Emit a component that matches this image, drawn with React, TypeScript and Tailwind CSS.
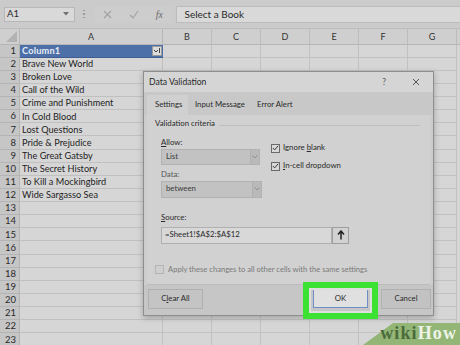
import React from "react";

const books = [
  "Brave New World",
  "Broken Love",
  "Call of the Wild",
  "Crime and Punishment",
  "In Cold Blood",
  "Lost Questions",
  "Pride & Prejudice",
  "The Great Gatsby",
  "The Secret History",
  "To Kill a Mockingbird",
  "Wide Sargasso Sea",
];

const cols = ["B", "C", "D", "E", "F", "G"];

function Row({ n, text, selected }: { n: number; text?: string; selected?: boolean }) {
  return (
    <div className="flex h-[13.14px] shrink-0">
      <div className="w-[20px] shrink-0 bg-[#c6c6c6] border-r border-b border-[#b4b4b4] flex items-center justify-end pr-[3px] text-[9.5px] text-[#2a2a2a] leading-none">
        {n}
      </div>
      {selected ? (
        <div className="w-[143px] shrink-0 bg-[#4d70a8] border-b border-[#3f5f93] flex items-center pl-[2px] text-[9.2px] text-[#e6ecf6] leading-none relative">
          <span className="font-bold tracking-[0.2px]">{text}</span>
          <div className="absolute right-[1px] top-[1px] w-[10px] h-[10px] bg-[#dcdcdc] border border-[#9a9a9a] flex items-center justify-center">
            <svg width="8" height="8" viewBox="0 0 8 8">
              <path d="M1 3 L3 5 L5 3" fill="none" stroke="#444" strokeWidth="1" />
              <path d="M6.5 1 V6" stroke="#444" strokeWidth="1" />
            </svg>
          </div>
        </div>
      ) : (
        <div className="w-[143px] shrink-0 bg-[#d6d6d6] border-r border-b border-[#c0c0c0] flex items-center pl-[2px] text-[9.2px] text-[#1e1e1e] leading-none whitespace-nowrap">
          {text}
        </div>
      )}
      {cols.map((c) => (
        <div key={c} className="w-[49px] shrink-0 bg-[#d6d6d6] border-r border-b border-[#c2c2c2]" />
      ))}
    </div>
  );
}

function Check({ checked }: { checked?: boolean }) {
  return (
    <div className="w-[9px] h-[9px] border border-[#6a6a6a] bg-[#d8d8d8] flex items-center justify-center shrink-0">
      {checked && (
        <svg width="8" height="8" viewBox="0 0 8 8">
          <path d="M1 4 L3 6.2 L7 1.5" fill="none" stroke="#333" strokeWidth="1.1" />
        </svg>
      )}
    </div>
  );
}

function Dropdown({ value, w, h }: { value: string; w: string; h: string }) {
  return (
    <div className={`${w} ${h} border border-[#b2b2b2] bg-[#c2c2c2] flex items-center`}>
      <span className="pl-[4px] text-[7.8px] text-[#3a3a3a] flex-1">{value}</span>
      <div className="w-[9px] h-full bg-[#b9b9b9] border-l border-[#b0b0b0] flex items-center justify-center">
        <svg width="6" height="4" viewBox="0 0 6 4">
          <path d="M0.5 0.5 L3 3 L5.5 0.5" fill="none" stroke="#8a8a8a" strokeWidth="0.9" />
        </svg>
      </div>
    </div>
  );
}

export default function App() {
  return (
    <div
      className="w-[460px] h-[345px] overflow-hidden relative bg-[#d6d6d6] flex flex-col"
      style={{ fontFamily: "Lato, 'Liberation Sans', sans-serif" }}
    >
      {/* formula bar */}
      <div className="h-[29px] shrink-0 bg-[#cbcbcb] border-b border-[#bdbdbd] flex items-center relative">
        <div className="ml-[4px] w-[71px] h-[15px] bg-[#d9d9d9] border border-[#b8b8b8] flex items-center justify-between px-[2px]">
          <span className="text-[9.5px] text-[#2a2a2a]">A1</span>
          <svg width="6" height="4" viewBox="0 0 6 4" className="mr-[3px]">
            <path d="M0 0 L6 0 L3 3.5 Z" fill="#707070" />
          </svg>
        </div>
        <div className="ml-[8px] flex flex-col gap-[2px]">
          <div className="w-[1.5px] h-[1.5px] bg-[#9a9a9a]" />
          <div className="w-[1.5px] h-[1.5px] bg-[#9a9a9a]" />
          <div className="w-[1.5px] h-[1.5px] bg-[#9a9a9a]" />
        </div>
        <div className="ml-[10px] w-[77px] h-[17px] bg-[#cdcdcd] flex items-center justify-around">
          <svg width="9" height="9" viewBox="0 0 9 9">
            <path d="M1 1 L8 8 M8 1 L1 8" stroke="#a2a2a2" strokeWidth="1.1" />
          </svg>
          <svg width="10" height="9" viewBox="0 0 10 9">
            <path d="M1 5 L4 8 L9 1" fill="none" stroke="#a2a2a2" strokeWidth="1.1" />
          </svg>
          <span className="text-[10px] italic text-[#6a6a6a]" style={{ fontFamily: "'Liberation Serif', serif" }}>
            fx
          </span>
        </div>
        <div className="ml-[4px] flex-1 h-[17px] bg-[#d9d9d9] border-l border-t border-b border-[#bcbcbc] flex items-center pl-[8px]">
          <span className="text-[10px] text-[#2a2a2a]">Select a Book</span>
        </div>
      </div>

      {/* column header */}
      <div className="h-[15.5px] shrink-0 flex bg-[#cfcfcf] border-b border-[#b6b6b6]">
        <div className="w-[20px] shrink-0 border-r border-[#b6b6b6] flex items-end justify-end p-[2px]">
          <svg width="11" height="11" viewBox="0 0 11 11">
            <path d="M11 0 L11 11 L0 11 Z" fill="#b2b2b2" />
          </svg>
        </div>
        <div className="w-[143px] shrink-0 border-r border-[#b6b6b6] flex items-center justify-center text-[9px] text-[#333]">
          A
        </div>
        {cols.map((c) => (
          <div key={c} className="w-[49px] shrink-0 border-r border-[#bdbdbd] flex items-center justify-center text-[9px] text-[#333]">
            {c}
          </div>
        ))}
      </div>

      {/* rows */}
      <Row n={1} text="Column1" selected />
      {books.map((b, i) => (
        <Row key={b} n={i + 2} text={b} />
      ))}
      {Array.from({ length: 11 }).map((_, i) => (
        <Row key={i} n={i + 13} />
      ))}

      {/* dialog */}
      <div className="absolute left-[143px] top-[71px] w-[291px] h-[245px] bg-[#cdcdcd] border border-[#8e8e8e] shadow-[0_2px_6px_rgba(0,0,0,0.25)] flex flex-col text-[#2a2a2a]">
        <div className="h-[20px] shrink-0 bg-[#d5d5d5] flex items-center pl-[5px] pr-[13px]">
          <span className="text-[8.6px] flex-1">Data Validation</span>
          <span className="text-[8.5px] text-[#555] mr-[26px]">?</span>
          <svg width="8" height="8" viewBox="0 0 8 8">
            <path d="M1 1 L7 7 M7 1 L1 7" stroke="#555" strokeWidth="1" />
          </svg>
        </div>
        <div className="h-[23px] shrink-0 bg-[#c8c8c8] flex items-end pl-[3px]">
          <div className="h-[20px] w-[41px] shrink-0 pl-[8px] bg-[#d0d0d0] flex items-center text-[7.8px] whitespace-nowrap">Settings</div>
          <div className="h-[20px] w-[69px] shrink-0 pl-[7px] flex items-center text-[7.8px] whitespace-nowrap">Input Message</div>
          <div className="h-[20px] shrink-0 flex items-center text-[7.8px] whitespace-nowrap">Error Alert</div>
        </div>
        <div className="mx-[3px] h-[170px] shrink-0 bg-[#d1d1d1] border-b border-[#bcbcbc] flex flex-col pl-[8px] pr-[10px]">
          <div className="mt-[5px] flex items-center gap-[4px]">
            <span className="text-[7.8px] leading-none">Validation criteria</span>
            <div className="flex-1 h-px bg-[#bfbfbf] mt-[3px]" />
          </div>
          <div className="pl-[6px] mt-[9px] flex">
            <div className="w-[99px] flex flex-col">
              <span className="text-[7.8px] leading-[10px]">
                <u>A</u>llow:
              </span>
              <div className="mt-[2px]">
                <Dropdown value="List" w="w-[99px]" h="h-[16px]" />
              </div>
              <span className="text-[7.8px] leading-[10px] mt-[4px] text-[#555]">Data:</span>
              <div className="mt-[2px]">
                <Dropdown value="between" w="w-[101px]" h="h-[17px]" />
              </div>
            </div>
            <div className="ml-[11px] mt-[7px] flex flex-col gap-[9px]">
              <div className="flex items-center gap-[3px]">
                <Check checked />
                <span className="text-[7.8px] leading-none">
                  Ignore <u>b</u>lank
                </span>
              </div>
              <div className="flex items-center gap-[3px]">
                <Check checked />
                <span className="text-[7.8px] leading-none">
                  <u>I</u>n-cell dropdown
                </span>
              </div>
            </div>
          </div>
          <div className="pl-[6px] mt-[4px]">
            <span className="text-[7.8px] leading-[10px]">
              <u>S</u>ource:
            </span>
            <div className="mt-[1px] w-[188px] h-[17px] flex">
              <div className="flex-1 bg-[#d8d8d8] border border-[#b0b0b0] flex items-center pl-[3px] text-[7.8px]">
                =Sheet1!$A$2:$A$12
              </div>
              <div className="w-[17px] bg-[#d2d2d2] border border-[#9e9e9e] flex items-center justify-center">
                <svg width="8" height="10" viewBox="0 0 8 10">
                  <path d="M4 9.5 V2 M1 4.5 L4 1 L7 4.5" fill="none" stroke="#222" strokeWidth="1.5" />
                </svg>
              </div>
            </div>
          </div>
          <div className="mt-auto mb-[10px] flex items-center gap-[4px]">
            <div className="w-[9px] h-[9px] border border-[#b4b4b4] bg-[#cfcfcf]" />
            <span className="text-[7.6px] text-[#7a7a7a] leading-none whitespace-nowrap">
              Apply these changes to all other cells with the same settings
            </span>
          </div>
        </div>
        <div className="flex-1 bg-[#c6c6c6] flex items-start pt-[4px] pl-[4px] relative">
          <div className="w-[55px] h-[20px] bg-[#c4c4c4] border border-[#b0b0b0] flex items-center justify-center text-[7.8px]">
            <span>
              C<u>l</u>ear All
            </span>
          </div>
          <div className="ml-[110px] w-[55px] h-[19px] bg-[#e0e0e0] border border-[#6f8fc4] flex items-center justify-center text-[7.8px]">
            OK
          </div>
          <div className="ml-[13px] w-[50px] h-[20px] bg-[#c2c2c2] border border-[#b0b0b0] flex items-center justify-center text-[7.8px]">
            Cancel
          </div>
        </div>
      </div>

      {/* green highlight */}
      <div className="absolute left-[303px] top-[282px] w-[75px] h-[37px] border-[6px] border-[#3ce232] shadow-[inset_0_0_0_2px_#dedede] pointer-events-none" />

      {/* wikiHow badge */}
      <div className="absolute right-0 bottom-0 w-[97px] h-[22px]">
        <svg width="97" height="22" viewBox="0 0 97 22" className="absolute inset-0">
          <polygon points="30,0 97,0 97,22 0,22" fill="#93b677" />
        </svg>
        <div
          className="absolute right-[3px] bottom-[3px] text-[18px] font-bold leading-none tracking-[1.1px]"
          style={{ fontFamily: "'Liberation Serif', 'DejaVu Serif', serif" }}
        >
          <span className="text-[#4a6a3a]">wiki</span>
          <span className="text-[#eef3e8]">How</span>
        </div>
      </div>
    </div>
  );
}
